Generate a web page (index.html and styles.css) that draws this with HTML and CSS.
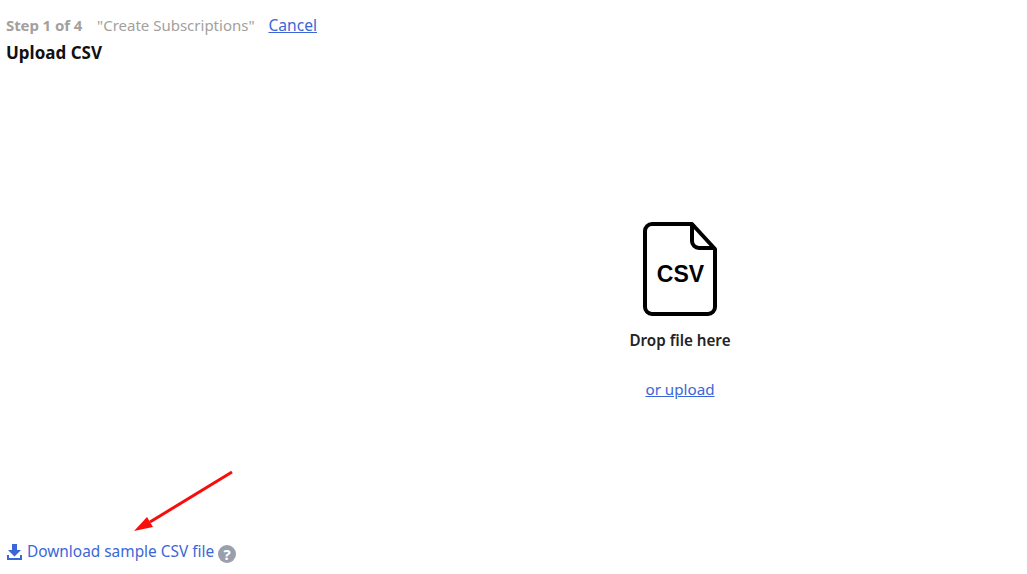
FILE: index.html
```html
<!DOCTYPE html>
<html lang="en">
<head>
    <meta charset="UTF-8">
    <meta name="viewport" content="width=device-width, initial-scale=1.0">
    <title>Upload CSV</title>
    <link rel="stylesheet" href="styles.css">
</head>
<body>
    <div class="page">
        <header class="steps">
            <p class="step-line">
                <strong class="step-count">Step 1 of 4</strong>
                <span class="step-name">"Create Subscriptions"</span>
                <a class="link cancel" href="#">Cancel</a>
            </p>
            <h1 class="step-title">Upload CSV</h1>
        </header>

        <section class="drop-area">
            <svg class="file-icon" width="74" height="94" viewBox="0 0 74 94" aria-hidden="true">
                <path d="M9 2H49L72 27V85a7 7 0 0 1-7 7H9a7 7 0 0 1-7-7V9a7 7 0 0 1 7-7Z" fill="#fff" stroke="#000" stroke-width="4" stroke-linejoin="round"/>
                <path d="M49 2V19a7 7 0 0 0 7 7H72" fill="none" stroke="#000" stroke-width="4" stroke-linejoin="round"/>
                <text class="file-label" x="37.5" y="60" text-anchor="middle">CSV</text>
            </svg>
            <p class="drop-text">Drop file here</p>
            <a class="link" href="#">or upload</a>
        </section>

        <footer class="sample">
            <a class="sample-link" href="#">
                <svg width="15" height="16" viewBox="0 0 15 16" aria-hidden="true">
                    <path d="M5 0H10V6H14L7.5 12.5L1 6H5Z" fill="#3b66d8"/>
                    <path d="M0 11H2V14H13V11H15V16H0Z" fill="#3b66d8"/>
                </svg>
                <span class="sample-text">Download sample CSV file</span>
            </a>
            <span class="help">?</span>
        </footer>
    </div>

    <svg class="arrow" width="110" height="70" viewBox="0 0 110 70" aria-hidden="true">
        <path d="M102 4L20 54" stroke="#f80d0d" stroke-width="3" fill="none"/>
        <path d="M4 63L17 49L23 59Z" fill="#f80d0d"/>
    </svg>
</body>
</html>
```

FILE: styles.css
```css
body {
    margin: 0;
    font-family: 'Noto Sans', sans-serif;
    font-size: 15px;
    color: #1a1a1a;
    background-color: #fff;
}
.page {
    display: flex;
    flex-direction: column;
    height: 574px;
    padding: 14px 6px 0;
    box-sizing: border-box;
}
.steps {
    height: 208px;
}
.step-line {
    margin: 0;
    line-height: 22px;
    color: #a3a09d;
}
.step-count {
    margin-right: 11px;
    letter-spacing: -0.1px;
}
.step-name {
    margin-right: 10px;
}
.step-title {
    margin: 6px 0 0;
    font-size: 17px;
    line-height: 22px;
    font-weight: 700;
    color: #111;
}
.link {
    color: #3b66d8;
    text-decoration: underline;
    font-size: 15.2px;
}
.cancel {
    font-size: 15.6px;
}
.drop-area {
    display: flex;
    flex-direction: column;
    align-items: center;
    padding-left: 333px;
}
.file-icon {
    display: block;
}
.file-label {
    font-family: 'Liberation Sans', sans-serif;
    font-size: 23px;
    font-weight: 700;
}
.drop-text {
    margin: 13px 0 28px;
    font-weight: 600;
    font-size: 15.2px;
    line-height: 22px;
    color: #222;
}
.sample {
    display: flex;
    align-items: flex-start;
    gap: 4px;
    margin-top: 142px;
    padding-left: 1px;
}
.sample-link {
    display: flex;
    align-items: center;
    gap: 5px;
    color: #3b66d8;
    text-decoration: none;
    line-height: 22px;
}
.sample-text {
    font-size: 15.4px;
}
.help {
    display: flex;
    justify-content: center;
    align-items: center;
    width: 18px;
    height: 18px;
    border-radius: 50%;
    margin-top: 4px;
    background-color: #9a9fae;
    color: #fff;
    font-size: 15px;
    font-weight: 700;
}
.arrow {
    position: absolute;
    left: 130px;
    top: 468px;
}
```
